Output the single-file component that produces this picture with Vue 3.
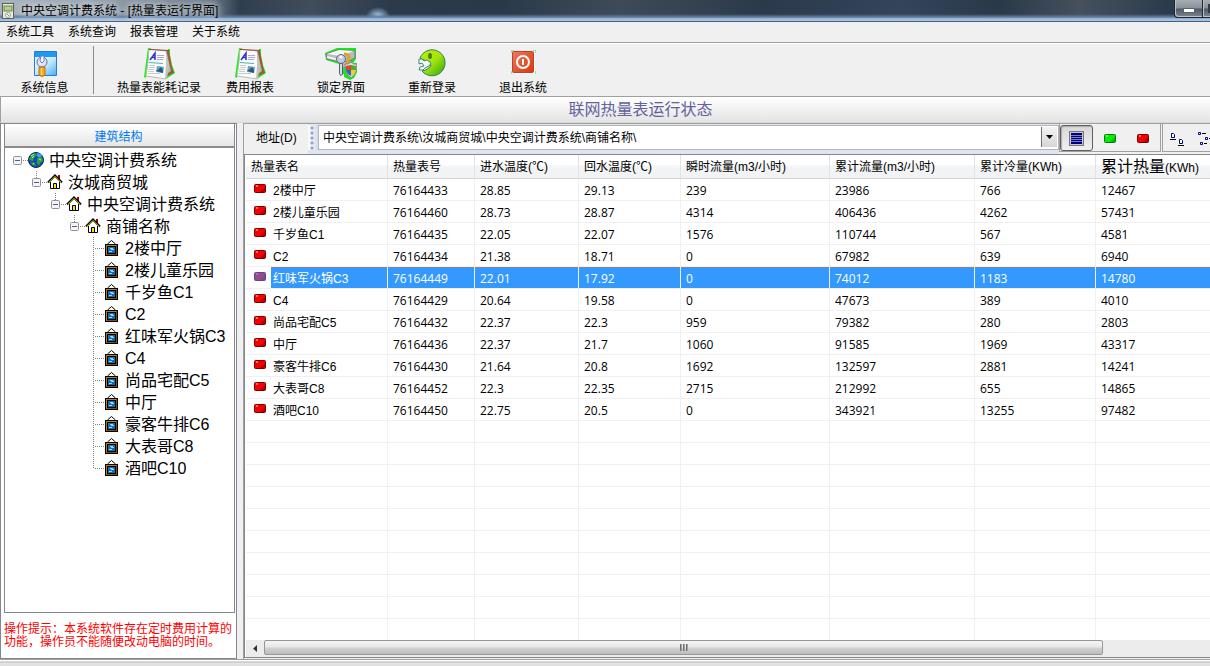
<script setup>
import { ref } from 'vue'

const menus = ['系统工具', '系统查询', '报表管理', '关于系统']

const tools = [
  { icon: 'info', label: '系统信息' },
  { icon: 'report', label: '热量表能耗记录' },
  { icon: 'report', label: '费用报表' },
  { icon: 'lock', label: '锁定界面' },
  { icon: 'login', label: '重新登录' },
  { icon: 'exit', label: '退出系统' }
]

const branches = [
  { depth: 0, name: '中央空调计费系统' },
  { depth: 1, name: '汝城商贸城' },
  { depth: 2, name: '中央空调计费系统' },
  { depth: 3, name: '商铺名称' }
]

const columns = [
  { key: 'name', label: '热量表名' },
  { key: 'no', label: '热量表号' },
  { key: 'in', label: '进水温度(℃)' },
  { key: 'out', label: '回水温度(℃)' },
  { key: 'flow', label: '瞬时流量(m3/小时)' },
  { key: 'total', label: '累计流量(m3/小时)' },
  { key: 'cold', label: '累计冷量(KWh)' }
]

const meters = [
  ['2楼中厅', '76164433', '28.85', '29.13', '239', '23986', '766', '12467'],
  ['2楼儿童乐园', '76164460', '28.73', '28.87', '4314', '406436', '4262', '57431'],
  ['千岁鱼C1', '76164435', '22.05', '22.07', '1576', '110744', '567', '4581'],
  ['C2', '76164434', '21.38', '18.71', '0', '67982', '639', '6940'],
  ['红味军火锅C3', '76164449', '22.01', '17.92', '0', '74012', '1183', '14780'],
  ['C4', '76164429', '20.64', '19.58', '0', '47673', '389', '4010'],
  ['尚品宅配C5', '76164432', '22.37', '22.3', '959', '79382', '280', '2803'],
  ['中厅', '76164436', '22.37', '21.7', '1060', '91585', '1969', '43317'],
  ['豪客牛排C6', '76164430', '21.64', '20.8', '1692', '132597', '2881', '14241'],
  ['大表哥C8', '76164452', '22.3', '22.35', '2715', '212992', '655', '14865'],
  ['酒吧C10', '76164450', '22.75', '20.5', '0', '343921', '13255', '97482']
]

const selected = ref(4)
const blankRows = 10
</script>

<template>
  <div class="window">
    <header class="titlebar">
      <svg class="app-icon" width="12" height="16" viewBox="0 0 12 16" aria-hidden="true">
        <rect x="0.5" y="0.5" width="11" height="15" fill="#e9ecd8" stroke="#5c6158" />
        <rect x="2" y="3" width="8" height="5" fill="#b5cf86" stroke="#6f8455" />
        <circle cx="6" cy="12" r="2.5" fill="#fff" stroke="#999" />
        <path d="M5 11l2 2" stroke="#777" />
      </svg>
      <h1>中央空调计费系统 - [热量表运行界面]</h1>
      <div class="win-buttons">
        <button type="button" aria-label="最小化"><span class="min-bar"></span></button>
        <button type="button" class="cut" aria-label="最大化"><span class="max-box"></span></button>
      </div>
    </header>

    <nav class="menubar">
      <button v-for="m in menus" :key="m" type="button">{{ m }}</button>
    </nav>

    <div class="toolbar">
      <template v-for="(t, i) in tools" :key="t.label">
        <button type="button">
          <svg v-if="t.icon === 'info'" width="32" height="32" viewBox="0 0 32 32" aria-hidden="true">
            <defs>
              <linearGradient id="winBody" x1="0" y1="0" x2="1" y2="1">
                <stop offset="0" stop-color="#f2faff" />
                <stop offset="0.5" stop-color="#c4e8ff" />
                <stop offset="1" stop-color="#4cb0f5" />
              </linearGradient>
            </defs>
            <rect x="5" y="3" width="23" height="25" rx="1" fill="#2a78da" />
            <rect x="6" y="4" width="21" height="5" fill="#1a9af5" />
            <rect x="6" y="9" width="21" height="18" fill="url(#winBody)" />
            <circle cx="13" cy="14" r="5" fill="#dfe6f8" stroke="#5a6faa" />
            <path d="M12 8h3v5l-2 2-2-2z" fill="#f4faff" stroke="#6f82b8" />
            <path d="M10 19h6v8q-3 3-6 0z" fill="#f7a81c" stroke="#b8720a" />
            <path d="M12.500 20v7" stroke="#ffd873" />
          </svg>
          <svg v-else-if="t.icon === 'report'" width="32" height="32" viewBox="0 0 32 32" aria-hidden="true">
            <path d="M5 0h3L3 30l-2-1zM25 1h2v6l2 10 3 8-9 6-3-1z" fill="#18f018" />
            <path d="M22 3h4l3 16 2 6-7 3z" fill="#9c5a35" />
            <path d="M24 6l4 17-4 3z" fill="#b9b8ae" />
            <path d="M6 1l17 2 2 11-2 17-20-3 2-14z" fill="#fafafa" stroke="#b9bab5" />
            <path d="M6 1.500l20 1" stroke="#8b4a2b" />
            <path d="M23 4l3 14-2 12-2 1 1-14z" fill="#c4c5c0" />
            <path d="M7 12l5-7v7M9 9.500h3" fill="none" stroke="#3030d0" stroke-width="1.500" />
            <path d="M14 7.500h7M14 9.500h7M14 11.500h6" stroke="#a8a8e0" />
            <path d="M6 14.500l14 1" stroke="#4eb2b0" />
            <path d="M6 17.500h6M6 19.500h6M5 21.500h6M5 23.500h6M5 25.500h12" stroke="#c8ccca" />
            <path d="M14 18l7 1-1 6-7-1z" fill="#5aa6cc" />
            <path d="M13 23l3-2 2-2 2 3v3z" fill="#2b5b7c" />
          </svg>
          <svg v-else-if="t.icon === 'lock'" width="32" height="32" viewBox="0 0 32 32" aria-hidden="true">
            <path d="M0 5L12 0h19v11l-3 4h4v9l-3 6-4 2-6-3v-3h-5V16L1 12z" fill="#17e617" />
            <path d="M1 6l12-4 17 1v7l-6 3-9 1-13-3z" fill="#b8babd" stroke="#77797c" />
            <path d="M2 6l12-4 15 1-14 5z" fill="#f5f6f7" />
            <path d="M2 9l12 3" stroke="#eef0f1" fill="none" stroke-width="2" />
            <path d="M17 14h8v2l-4 3h-4z" fill="#b9bbc0" />
            <path d="M19 6q7 0 4 7l-2 5" stroke="#e0a02a" stroke-width="3" fill="none" />
            <circle cx="16" cy="11" r="4.500" fill="#c3c9da" stroke="#616b84" />
            <circle cx="16" cy="9" r="1.500" fill="#fff" />
            <path d="M14.500 15.500h3v11l-2 1-1-2z" fill="#d9dce7" stroke="#596079" />
            <path d="M26 14q3 3 6 2 0 10-6 14-6-4-6-14 3 1 6-2z" fill="#d9dde3" stroke="#7c8896" />
            <path d="M26 17v5h-5q-1-3 0-4z" fill="#df4522" />
            <path d="M26 17l5 1v4h-5z" fill="#55a932" />
            <path d="M21 22h5v6q-4-2-5-6z" fill="#2867c2" />
            <path d="M26 22h5q-1 4-5 6z" fill="#f7cf25" />
          </svg>
          <svg v-else-if="t.icon === 'login'" width="32" height="32" viewBox="0 0 32 32" aria-hidden="true">
            <defs>
              <linearGradient id="ball" x1="0" y1="0" x2="1" y2="1">
                <stop offset="0" stop-color="#c4f000" />
                <stop offset="0.5" stop-color="#a2e60a" />
                <stop offset="1" stop-color="#2f9d16" />
              </linearGradient>
            </defs>
            <path d="M4 10A13 13 0 1 1 6 23l4-1 5-4-1-4-6-2z" fill="url(#ball)" stroke="#2a8450" />
            <path d="M3 11l3 0 2 2 3-1 4 3-2 3-4 2-2 2-4 0 1-3 4-1-2-3-3 1z" fill="#f8fbf5" stroke="#3b8d77" />
            <ellipse cx="14" cy="8" rx="2" ry="3" fill="#4f7a0b" />
          </svg>
          <svg v-else width="32" height="32" viewBox="0 0 32 32" aria-hidden="true">
            <defs>
              <linearGradient id="power" x1="0" y1="0" x2="1" y2="1">
                <stop offset="0" stop-color="#ec7864" />
                <stop offset="1" stop-color="#de3605" />
              </linearGradient>
            </defs>
            <path d="M4 2h3v3H4zM26 2h3v3h-3zM4 23h3v3H4zM26 23h3v3h-3z" fill="#8dea8d" />
            <rect x="5" y="3" width="23" height="23" rx="1" fill="#fff" />
            <rect x="5.500" y="3.500" width="21" height="21" rx="1" fill="url(#power)" stroke="#c04028" />
            <circle cx="16" cy="14" r="6" fill="none" stroke="#fff" stroke-width="2" />
            <path d="M16 11v6" stroke="#fff" stroke-width="2" />
          </svg>
          <span>{{ t.label }}</span>
        </button>
        <span v-if="i === 0" class="tool-sep"></span>
      </template>
    </div>

    <h2 class="banner">联网热量表运行状态</h2>

    <main class="body">
      <aside class="side">
        <div class="tree-box">
          <h3>建筑结构</h3>
          <ul class="tree">
            <li v-for="b in branches" :key="b.depth" :class="'depth-' + b.depth">
              <button type="button" class="expander" :aria-label="'折叠 ' + b.name">
                <svg width="15" height="22" viewBox="0 0 15 22" aria-hidden="true">
                  <path v-if="b.depth" d="M4.500 0v7" stroke="#808080" stroke-dasharray="1 1" />
                  <rect x="0.500" y="7.500" width="8" height="8" rx="1" fill="#f4f4f4" stroke="#919191" />
                  <path d="M2 11.500h5" stroke="#3f5fa8" />
                  <path d="M10 11.500h5" stroke="#808080" stroke-dasharray="1 1" />
                </svg>
              </button>
              <svg v-if="b.depth === 0" class="node-icon" width="16" height="16" viewBox="0 0 16 16" aria-hidden="true">
                <circle cx="8" cy="8" r="7.500" fill="#1645c4" stroke="#0b2a62" />
                <path d="M9 1q4 0 5 3l-3 2-2-2z" fill="#37a4f5" />
                <path d="M3 3l4-2 2 2-3 3-1 3-4-1zM9 6l5-1 1 4-3 2-1 3-2-3zM3 10l4 1 1 3-4-1z" fill="#2ba52b" />
                <path d="M3 4l3-2M4 6l2-2M11 7l2 1M5 11l1 1" stroke="#c2f0c2" />
              </svg>
              <svg v-else class="node-icon" width="16" height="16" viewBox="0 0 16 16" aria-hidden="true">
                <path d="M11 1h2v6h-2z" fill="#a00000" />
                <path d="M3.500 7.500L8 3l4.500 4.500v7h-9z" fill="#fff" stroke="#000" />
                <path d="M1 8.500l7-7 7 7" fill="none" stroke="#000" stroke-width="2" />
                <path d="M2 8.500l6-6 6 6" fill="none" stroke="#ffff32" />
                <path d="M6.500 14.500v-5h3v5z" fill="#ffe300" stroke="#000" />
              </svg>
              <span>{{ b.name }}</span>
            </li>
            <li v-for="(m, i) in meters" :key="m[1]" class="leaf">
              <svg width="12" height="22" viewBox="0 0 12 22" aria-hidden="true">
                <path :d="i === meters.length - 1 ? 'M0.5 0v11' : 'M0.5 0v22'" stroke="#808080" stroke-dasharray="1 1" />
                <path d="M2 11.500h10" stroke="#808080" stroke-dasharray="1 1" />
              </svg>
              <svg class="leaf-icon" width="13" height="16" viewBox="0 0 13 16" aria-hidden="true">
                <path d="M2.500 4l4-3.500 4 3.500" fill="none" stroke="#000" />
                <rect x="0" y="4" width="13" height="12" fill="#000" />
                <rect x="1" y="5" width="11" height="10" fill="#c47a18" />
                <path d="M12 5v10H1z" fill="#8a4c04" />
                <rect x="2" y="6" width="9" height="8" fill="#000" />
                <rect x="3" y="7" width="7" height="6" fill="#0c70b4" />
                <path d="M5 8h3v1H5zM6 9h3v1H6zM4 11h3v1H4z" fill="#8cd8ff" />
              </svg>
              <span>{{ m[0] }}</span>
            </li>
          </ul>
        </div>
        <p class="hint">操作提示：本系统软件存在定时费用计算的功能，操作员不能随便改动电脑的时间。</p>
      </aside>

      <section class="content">
        <div class="address-bar">
          <label for="address">地址(D)</label>
          <div class="combo">
            <span class="grip"></span>
            <select id="address">
              <option>中央空调计费系统\汝城商贸城\中央空调计费系统\商铺名称\</option>
            </select>
            <span class="drop">
              <svg width="7" height="4" viewBox="0 0 7 4" aria-hidden="true"><path d="M0 0h7L3.500 4z" fill="#000" /></svg>
            </span>
          </div>
          <div class="view-buttons">
            <button type="button" class="pressed" aria-label="列表">
              <svg width="15" height="15" viewBox="0 0 15 15" aria-hidden="true">
                <rect x="0.500" y="0.500" width="14" height="14" fill="#c8c8c8" stroke="#777" />
                <rect x="2" y="2" width="11" height="11" fill="#000082" />
                <path d="M2 4.500h11M2 6.500h11M2 8.500h11M2 10.500h11" stroke="#7a82bc" />
              </svg>
            </button>
            <button type="button" aria-label="开启">
              <svg width="12" height="9" viewBox="0 0 12 9" aria-hidden="true">
                <rect x="0.500" y="0.500" width="11" height="8" rx="1" fill="#00f000" stroke="#0a7a0a" />
                <path d="M11 3v5H6z" fill="#0fae0f" />
                <path d="M2 2h2" stroke="#d6ffd6" />
              </svg>
            </button>
            <button type="button" aria-label="关闭">
              <svg width="12" height="9" viewBox="0 0 12 9" aria-hidden="true">
                <rect x="0.500" y="0.500" width="11" height="8" rx="1" fill="#f80000" stroke="#7a0000" />
                <path d="M11 3v5H6z" fill="#b40000" />
                <path d="M2 2h2" stroke="#ffd6d6" />
              </svg>
            </button>
          </div>
          <div class="layout-buttons">
            <button type="button" aria-label="大图标">
              <svg width="14" height="14" viewBox="0 0 14 14" aria-hidden="true">
                <path d="M1.500 1.500h2l1 1v3h-3zM9.500 7.500h2l1 1v3h-3z" fill="#fff" stroke="#000082" />
                <path d="M0 7.500h6M8 13.500h6" stroke="#000" />
              </svg>
            </button>
            <button type="button" aria-label="小图标">
              <svg width="14" height="14" viewBox="0 0 14 14" aria-hidden="true">
                <path d="M0.500 0.500h2v2h-2zM7.500 5.500h2v2h-2zM2.500 10.500h2v2h-2z" fill="#fff" stroke="#000082" />
                <path d="M4 1.500h4M11 6.500h3M6 11.500h3" stroke="#000" />
              </svg>
            </button>
          </div>
        </div>

        <div class="list">
          <div class="grid-view">
            <table>
              <colgroup>
                <col v-for="c in columns" :key="c.key" :class="'w-' + c.key" />
                <col />
              </colgroup>
              <thead>
                <tr>
                  <th v-for="c in columns" :key="c.key" scope="col">{{ c.label }}</th>
                  <th scope="col"><span class="large">累计热量</span>(KWh)</th>
                </tr>
              </thead>
              <tbody>
                <tr v-for="(m, r) in meters" :key="m[1]" :class="{ selected: r === selected }" @click="selected = r">
                  <td v-for="(v, c) in m" :key="c">
                    <div v-if="c === 0" class="name-cell">
                      <svg width="12" height="9" viewBox="0 0 12 9" aria-hidden="true">
                        <rect x="0.500" y="0.500" width="11" height="8" rx="1" :fill="r === selected ? '#9a4a86' : '#f80000'" :stroke="r === selected ? '#5a4a92' : '#7a0000'" />
                        <path d="M11 3v5H6z" :fill="r === selected ? '#7c4a8c' : '#b40000'" />
                        <path d="M2 2h2" :stroke="r === selected ? '#b8a0d8' : '#ffd6d6'" />
                      </svg>
                      <span>{{ v }}</span>
                    </div>
                    <template v-else>{{ v }}</template>
                  </td>
                </tr>
                <tr v-for="n in blankRows" :key="'blank' + n">
                  <td v-for="c in 8" :key="c"></td>
                </tr>
              </tbody>
            </table>
          </div>
          <div class="scrollbar">
            <button type="button" class="scroll-left" aria-label="向左滚动">
              <svg width="4" height="7" viewBox="0 0 4 7" aria-hidden="true"><path d="M4 0v7L0 3.500z" fill="#333" /></svg>
            </button>
            <div class="thumb"><i></i><i></i><i></i></div>
            <div class="track"></div>
          </div>
        </div>
      </section>
    </main>

    <footer class="statusbar"></footer>
  </div>
</template>

<style>
html,
body {
  background: #f0f0f0;
  overflow: hidden;
}
</style>

<style scoped>
* {
  box-sizing: border-box;
}
.window {
  display: flex;
  flex-direction: column;
  height: 100vh;
  font: 12px/16px "Liberation Sans", "Noto Sans CJK SC", sans-serif;
  color: #000;
  background: #f0f0f0;
}
button {
  font: inherit;
  color: inherit;
  margin: 0;
  padding: 0;
  border: 0;
  background: none;
  white-space: nowrap;
}
svg {
  display: block;
  flex: none;
}
h1,
h2,
h3,
p,
ul {
  margin: 0;
  padding: 0;
  font-weight: normal;
}

.titlebar {
  flex: none;
  display: flex;
  align-items: center;
  height: 22px;
  padding-left: 2px;
  gap: 7px;
  border-bottom: 1px solid #4f5f74;
  background:
    linear-gradient(to bottom, transparent 14px, #5f7b9c 17px, #9fc0e2 19px, #a5c3e2 21px),
    radial-gradient(ellipse 12px 9px at 378px 16px, #a9cdee, transparent),
    linear-gradient(to right, #a9b3bd 0, #98a4ae 80px, #7f8c98 160px, #64717f 215px, #2f3e4f 240px, #414c5c 310px, #2c3b4c 390px, #2a394a 500px, #3e4a59 620px, #2b3a4b 760px, #34445a 900px, #2a3949 1000px, #46505e 1080px, #2b3b4c 1170px);
}
.titlebar h1 {
  flex: 1;
  font-size: 12px;
  white-space: nowrap;
  text-shadow: 0 0 6px #dfe5ea, 0 0 8px #dfe5ea;
}
.win-buttons {
  display: flex;
  align-self: flex-start;
}
.win-buttons button {
  display: flex;
  align-items: center;
  justify-content: center;
  width: 29px;
  height: 18px;
  border: 1px solid #20262e;
  border-top: 0;
  border-radius: 0 0 0 4px;
  background: linear-gradient(#a7adb4, #8a919a 8px, #505965 9px, #7d8792);
  box-shadow: inset 1px -1px 0 #b9c0c8;
}
.win-buttons .cut {
  width: 7px;
  justify-content: flex-end;
  overflow: hidden;
  border-left: 0;
  border-right: 0;
  border-radius: 0;
}
.min-bar {
  width: 12px;
  height: 5px;
  margin-top: 4px;
  background: #fff;
  border: 1px solid #5b636d;
}
.max-box {
  width: 2px;
  height: 9px;
  background: #333b45;
}

.menubar {
  flex: none;
  display: flex;
  height: 21px;
  gap: 14px;
  padding: 0 6px;
  border-bottom: 1px solid #a0a0a0;
}
.toolbar {
  flex: none;
  display: flex;
  height: 54px;
  border-top: 1px solid #fff;
  border-bottom: 1px solid #a0a0a0;
}
.toolbar button {
  display: flex;
  flex-direction: column;
  align-items: center;
  justify-content: flex-start;
  width: 91px;
  padding: 4px 1px 0 0;
}
.toolbar button:first-child {
  width: 90px;
}
.tool-sep {
  width: 1px;
  height: 48px;
  margin: 2px 20px 0 3px;
  background: #8c8c8c;
}
.banner {
  flex: none;
  height: 26px;
  padding-left: 70px;
  border-left: 1px solid #a0a0a0;
  border-bottom: 1px solid #d8d8d8;
  background: linear-gradient(#fff, #e4e4e4);
  font-size: 16px;
  line-height: 26px;
  text-align: center;
  color: #62629c;
}

.body {
  flex: 1;
  display: flex;
  gap: 6px;
  min-height: 0;
}
.side {
  flex: none;
  display: flex;
  flex-direction: column;
  width: 237px;
  padding: 0 1px 0 3px;
  border: 1px solid #828790;
  background: #fff;
}
.tree-box {
  flex: 1;
  min-height: 0;
  border: 1px solid #828790;
  border-top: 0;
}
.tree-box h3 {
  height: 24px;
  padding-right: 2px;
  border-bottom: 2px solid #8c8c8c;
  background: linear-gradient(#fff, #e6e6e6);
  font-size: 12px;
  line-height: 26px;
  text-align: center;
  color: #0078f0;
}
.tree {
  list-style: none;
  padding-top: 1px;
  font-size: 16px;
  line-height: 20px;
}
.tree li {
  display: flex;
  align-items: center;
  height: 22px;
  white-space: nowrap;
}
.tree span {
  padding-top: 2px;
}
.expander,
.leaf > svg:first-child {
  height: 22px;
}
.node-icon {
  margin-right: 5px;
}
.depth-0 {
  padding-left: 8px;
}
.depth-1 {
  padding-left: 27px;
}
.depth-2 {
  padding-left: 46px;
}
.depth-3 {
  padding-left: 65px;
}
.leaf {
  padding-left: 88px;
}
.leaf-icon {
  margin-right: 7px;
}
.hint {
  flex: none;
  width: 229px;
  padding: 10px 0 9px;
  line-height: 13px;
  color: #f00;
}

.content {
  flex: 1;
  display: flex;
  flex-direction: column;
  min-width: 0;
  border-left: 1px solid #a0a0a0;
  border-top: 1px solid #a0a0a0;
}
.address-bar {
  flex: none;
  display: flex;
  height: 30px;
}
.address-bar label {
  width: 64px;
  padding-left: 12px;
  line-height: 28px;
}
.combo {
  flex: 1;
  position: relative;
  display: flex;
  min-width: 0;
  padding-top: 1px;
  border-bottom: 4px solid #dfe4f2;
  background: #dfe5f2;
}
.grip {
  width: 10px;
  background: radial-gradient(circle at 4px 3px, #9aa3b8 1px, transparent 2px) 0 0 / 11px 5px, linear-gradient(to right, #fafbfd, #d3dcef);
}
.combo select {
  flex: 1;
  min-width: 0;
  appearance: none;
  font: inherit;
  color: #000;
  margin: 0;
  padding: 0 20px 0 4px;
  border: 1px solid #b4b4b4;
  border-radius: 0;
  background: #fff;
}
.drop {
  position: absolute;
  right: 2px;
  top: 3px;
  bottom: 3px;
  width: 16px;
  display: flex;
  align-items: center;
  justify-content: center;
  border-left: 1px solid #707070;
  background: linear-gradient(#f4f4f4, #d6d6d6);
  pointer-events: none;
}
.view-buttons,
.layout-buttons {
  flex: none;
  display: flex;
  height: 28px;
  border: 1px solid #a0a0a0;
  border-top: 0;
  background: #f0f0f0;
}
.view-buttons button {
  display: flex;
  align-items: center;
  justify-content: center;
  width: 33px;
  height: 26px;
}
.view-buttons {
  width: 102px;
  padding-top: 1px;
}
.view-buttons .pressed {
  border: 1px solid #5f5f5f;
  border-radius: 3px;
  background: linear-gradient(#d8d8d8, #f0f0f0);
  box-shadow: inset 1px 1px 1px #aaa;
}
.layout-buttons {
  width: 48px;
  margin-left: 1px;
  padding-left: 7px;
  padding-top: 8px;
  gap: 14px;
  border-right: 0;
  overflow: hidden;
}
.layout-buttons button {
  height: 14px;
}

.list {
  flex: 1;
  display: flex;
  flex-direction: column;
  min-height: 0;
  margin-bottom: 1px;
  padding-left: 1px;
  border-top: 1px solid #828790;
  border-left: 1px solid #828790;
  border-bottom: 1px solid #828790;
  background: #fff;
}
.grid-view {
  flex: 1;
  min-height: 0;
  overflow: hidden;
}
table {
  width: 100%;
  table-layout: fixed;
  border-collapse: separate;
  border-spacing: 0;
}
.w-name {
  width: 142px;
}
.w-no {
  width: 87px;
}
.w-in {
  width: 104px;
}
.w-out {
  width: 102px;
}
.w-flow {
  width: 149px;
}
.w-total {
  width: 145px;
}
.w-cold {
  width: 121px;
}
th,
td {
  padding: 0 0 0 5px;
  text-align: left;
  font-weight: normal;
  white-space: nowrap;
  overflow: hidden;
}
th {
  height: 24px;
  padding-top: 2px;
  line-height: 19px;
  border-right: 1px solid #e0e2e4;
  border-bottom: 1px solid #d5d5d5;
  background: linear-gradient(#fff 10px, #f3f4f6 11px, #f1f2f4);
}
th .large {
  font-size: 16px;
}
td {
  height: 22px;
  padding-top: 2px;
  line-height: 19px;
  border-right: 1px solid #f0f0f0;
  border-bottom: 1px solid #f0f0f0;
  font-family: "Open Sans", "Noto Sans", sans-serif;
}
th:last-child,
td:last-child {
  border-right: 0;
}
td:first-child {
  padding-top: 0;
  padding-left: 8px;
  font-family: "Liberation Sans", "Noto Sans CJK SC", sans-serif;
}
.name-cell {
  display: flex;
  align-items: center;
  gap: 5px;
  height: 21px;
}
.name-cell svg {
  margin-bottom: 2px;
}
.name-cell span {
  flex: 1;
  padding-left: 2px;
  padding-top: 4px;
  line-height: 17px;
}
.selected td {
  color: #fff;
  background: #39f;
}
.selected td:first-child {
  background: #fff;
}
.selected td:not(:first-child),
.selected .name-cell span {
  background: repeating-linear-gradient(to right, #c87830 0, #c87830 1px, #39f 1px, #39f 2px) 0 0 / 100% 1px no-repeat, #39f;
}

.scrollbar {
  flex: none;
  display: flex;
  height: 17px;
  background: #ececec;
}
.scroll-left {
  display: flex;
  align-items: center;
  justify-content: center;
  width: 18px;
}
.thumb {
  flex: 839;
  display: flex;
  align-items: center;
  justify-content: center;
  gap: 1px;
  height: 15px;
  border: 1px solid #979797;
  border-radius: 2px;
  background: linear-gradient(#f5f5f5, #e8e8e8 6px, #d2d2d2 7px, #bdbdbd);
}
.thumb i {
  width: 2px;
  height: 7px;
  background: linear-gradient(to right, #555, #bbb);
}
.track {
  flex: 107;
}
.statusbar {
  flex: none;
  height: 7px;
  border-top: 1px solid #a0a0a0;
  background: linear-gradient(#fff 1px, #b4b4b4 2px, #e6e6e6 3px, #dcdcdc);
}
</style>
